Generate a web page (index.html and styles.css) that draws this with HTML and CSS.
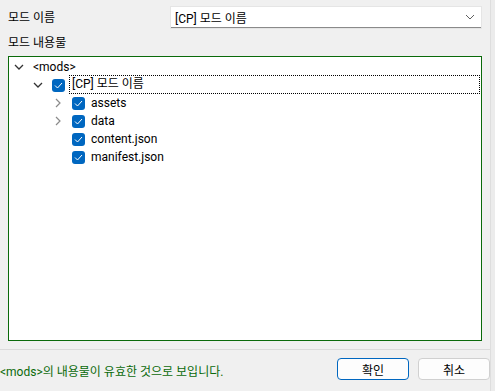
FILE: index.html
```html
<!DOCTYPE html>
<html lang="ko">
<head>
    <meta charset="UTF-8">
    <title>모드 내보내기</title>
    <link rel="stylesheet" href="styles.css">
</head>
<body>

<div class="window">
    <div class="field-row">
        <label class="field-label">모드 이름</label>
        <div class="combo">
            <span class="combo-text">[CP] 모드 이름</span>
            <svg class="combo-arrow" width="10" height="6" viewBox="0 0 10 6">
                <path d="M1 1 L5 5 L9 1" fill="none" stroke="#606060" stroke-width="1"/>
            </svg>
        </div>
    </div>

    <div class="section-label">모드 내용물</div>

    <div class="tree">
        <div class="node lvl0">
            <span class="twisty">
                <svg width="10" height="6" viewBox="0 0 10 6"><path d="M1 1 L5 5 L9 1" fill="none" stroke="#333" stroke-width="1.3"/></svg>
            </span>
            <span class="node-text">&lt;mods&gt;</span>
        </div>
        <div class="node lvl1">
            <span class="twisty">
                <svg width="10" height="6" viewBox="0 0 10 6"><path d="M1 1 L5 5 L9 1" fill="none" stroke="#333" stroke-width="1.3"/></svg>
            </span>
            <span class="check"><svg width="9" height="7" viewBox="0 0 9 7"><path d="M1 3.5 L3.5 6 L8 1" fill="none" stroke="#fff" stroke-width="1"/></svg></span>
            <span class="node-text focused">[CP] 모드 이름</span>
        </div>
        <div class="node lvl2">
            <span class="twisty">
                <svg width="6" height="10" viewBox="0 0 6 10"><path d="M1 1 L5 5 L1 9" fill="none" stroke="#8a8a8a" stroke-width="1.2"/></svg>
            </span>
            <span class="check"><svg width="9" height="7" viewBox="0 0 9 7"><path d="M1 3.5 L3.5 6 L8 1" fill="none" stroke="#fff" stroke-width="1"/></svg></span>
            <span class="node-text">assets</span>
        </div>
        <div class="node lvl2">
            <span class="twisty">
                <svg width="6" height="10" viewBox="0 0 6 10"><path d="M1 1 L5 5 L1 9" fill="none" stroke="#8a8a8a" stroke-width="1.2"/></svg>
            </span>
            <span class="check"><svg width="9" height="7" viewBox="0 0 9 7"><path d="M1 3.5 L3.5 6 L8 1" fill="none" stroke="#fff" stroke-width="1"/></svg></span>
            <span class="node-text">data</span>
        </div>
        <div class="node lvl2">
            <span class="twisty"></span>
            <span class="check"><svg width="9" height="7" viewBox="0 0 9 7"><path d="M1 3.5 L3.5 6 L8 1" fill="none" stroke="#fff" stroke-width="1"/></svg></span>
            <span class="node-text">content.json</span>
        </div>
        <div class="node lvl2">
            <span class="twisty"></span>
            <span class="check"><svg width="9" height="7" viewBox="0 0 9 7"><path d="M1 3.5 L3.5 6 L8 1" fill="none" stroke="#fff" stroke-width="1"/></svg></span>
            <span class="node-text">manifest.json</span>
        </div>
    </div>

    <div class="footer">
        <span class="status">&lt;mods&gt;의 내용물이 유효한 것으로 보입니다.</span>
        <div class="buttons">
            <button class="btn primary">확인</button>
            <button class="btn">취소</button>
        </div>
    </div>
</div>

</body>
</html>
```

FILE: styles.css
```css
html, body {
    margin: 0;
    padding: 0;
    height: 100%;
}

body {
    background: #ececec;
    font-family: Roboto, "Noto Sans CJK KR", sans-serif;
    font-size: 12px;
    color: #000;
}

.window {
    width: 490px;
    height: 391px;
    background: #f0f0f0;
    border-right: 1px solid #dedede;
    display: flex;
    flex-direction: column;
}

.field-row {
    display: grid;
    grid-template-columns: 163px 310px;
    align-items: center;
    padding: 7px 0 0 8px;
}

.field-label {
    line-height: 20px;
}

.combo {
    height: 20px;
    background: #fff;
    border-bottom: 1px solid #8a8a8a;
    box-shadow: 0 0 0 1px #e5e5e5;
    display: flex;
    align-items: center;
    padding: 0 6px 0 4px;
}

.combo-text {
    flex: 1;
}

.section-label {
    padding: 4px 0 0 8px;
    line-height: 22px;
}

.tree {
    margin: 2px 0 0 8px;
    width: 474px;
    height: 285px;
    background: #fff;
    border: 1px solid #0a6a0a;
    padding-top: 1px;
    box-sizing: border-box;
}

.node {
    display: flex;
    align-items: center;
    height: 18px;
}

.node.lvl0 { padding-left: 2px; }
.node.lvl1 { padding-left: 21px; }
.node.lvl2 { padding-left: 41px; }

.twisty {
    width: 16px;
    height: 18px;
    display: flex;
    align-items: center;
    justify-content: center;
    margin-right: 6px;
}

.check {
    width: 13px;
    height: 13px;
    border-radius: 3px;
    background: #0067c0;
    display: flex;
    align-items: center;
    justify-content: center;
    margin-right: 4px;
}

.node-text {
    line-height: 17px;
    padding: 0 2px;
}

.node.lvl0 .node-text {
    padding: 0;
}

.node-text.focused {
    flex: 1;
    border: 1px dotted #000;
    margin-right: 1px;
    margin-top: -2px;
}

.footer {
    margin-top: 8px;
    border-top: 1px solid #dadada;
    display: flex;
    align-items: center;
    justify-content: space-between;
    padding: 8px 0 0 0;
}

.status {
    color: #0a6a0a;
    margin-top: 2px;
}

.buttons {
    display: flex;
    gap: 9px;
}

.btn {
    width: 72px;
    height: 22px;
    font-family: Roboto, "Noto Sans CJK KR", sans-serif;
    font-size: 12px;
    background: #fdfdfd;
    border: 1px solid #d0d0d0;
    border-radius: 4px;
    padding: 0;
}

.btn.primary {
    border-color: #0067c0;
}
```
